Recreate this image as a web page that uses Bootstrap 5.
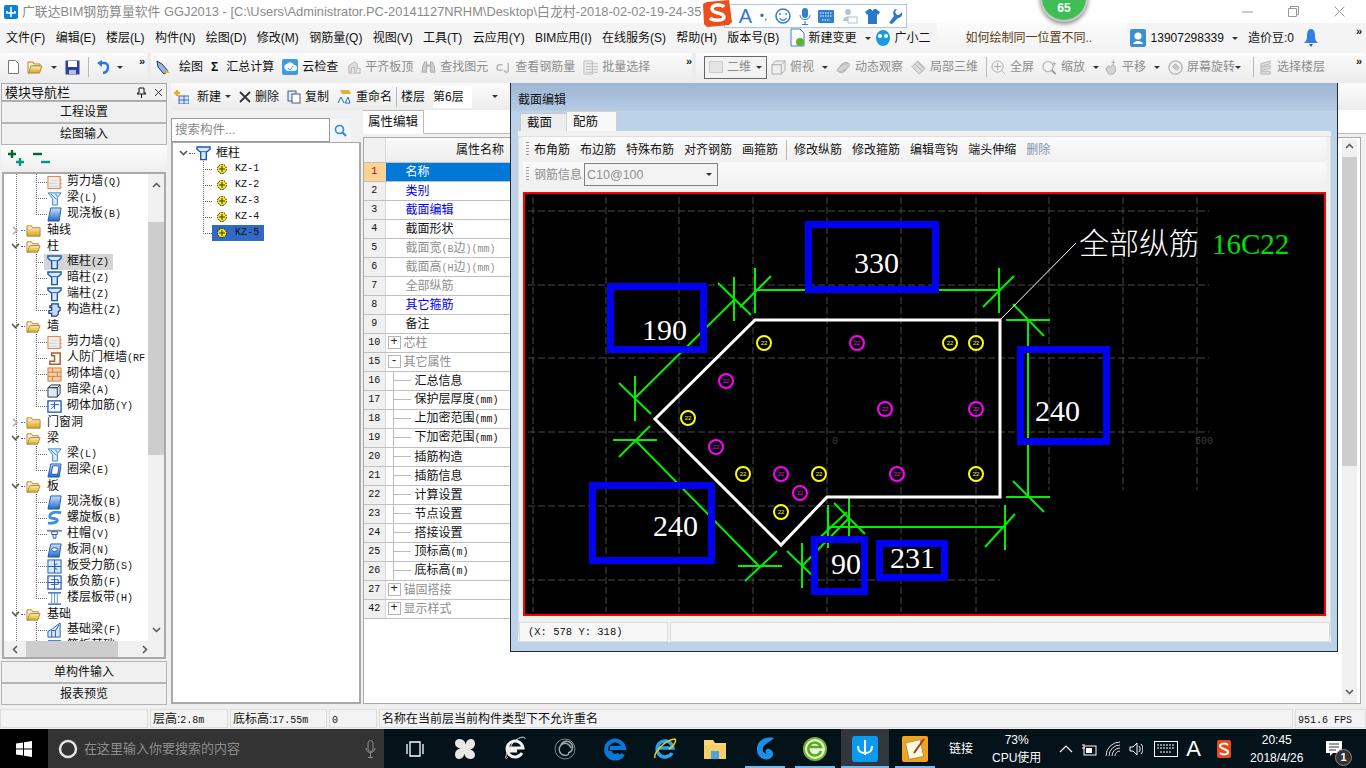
<!DOCTYPE html>
<html lang="zh-CN">
<head>
  <meta charset="UTF-8">
  <meta name="viewport" content="width=device-width, initial-scale=1.0">
  <title>广联达BIM钢筋算量软件 GGJ2013</title>
  <link href="https://cdn.jsdelivr.net/npm/bootstrap@5.3.0/dist/css/bootstrap.min.css" rel="stylesheet">
  <style>
    html, body { height: 768px; overflow: hidden; }
    body { font: 12px/16px "Liberation Sans", "Noto Sans CJK SC", sans-serif; color: #111; background: #f0f0f0; position: relative; }
    svg { display: block; flex: none; }

    /* title + menu */
    .win-title { height: 23px; background: #fff; color: #8a8a8a; font-size: 12.85px; padding-left: 4px; white-space: nowrap; overflow: hidden; }
    .win-title .ttl { margin-left: 4px; width: 690px; overflow: hidden; }
    .win-ctrl { width: 46px; height: 23px; color: #9a9a9a; }
    .win-menu { height: 30px; background: #f4f4f4; padding-left: 6px; font-size: 12px; white-space: nowrap; }
    .win-menu .mi { margin-right: 10.3px; }
    .qbox { width: 189px; height: 30px; margin-left: 6px; background: linear-gradient(#fbfbfb, #f2f2f2); color: #5a3a10; padding-left: 29px; line-height: 30px; }
    .ul-num { margin-left: 5px; }
    .ul-bean, .ul-bell { margin-left: 10px; }
    .win-tools { height: 30px; background: #ececec; white-space: nowrap; }
    .tool-sec { height: 28px; background: linear-gradient(#fbfbfb, #ececec); border-radius: 2px; }
    .off { color: #8c8c8c; }
    .caret-mini { width: 0; height: 0; border: 3px solid transparent; border-top: 3px solid #333; margin-top: 3px; flex: none; }
    .more { font: 700 11px/10px "Liberation Sans", sans-serif; color: #222; align-self: flex-start; margin-top: 3px; }
    .vsep { width: 1px; height: 20px; background: #b9b9b9; flex: none; }
    .twod { width: 63px; height: 23px; border: 1px solid #666; color: #8c8c8c; background: #f2f2f2; }
    .swatch { width: 14px; height: 12px; background: #e4e4e4; border: 1px solid #ccc; }
    .toolsec-a { width: 147px; }
    .toolsec-b { width: 541px; }

    /* workspace */
    .work { height: 625px; }
    .side { width: 166px; margin-left: 1px; flex: none; }
    .side-cap { height: 18px; border: 1px solid #a8a8a8; padding: 0 3px; font-size: 13px; line-height: 15px; background: #f0f0f0; }
    .side-btn.btn { display: block; width: 100%; height: 22px; padding: 0; border: 1px solid #b4b4b4; border-radius: 0; background: #f0f0f0; color: #111; font-size: 12px; line-height: 20px; }
    .side-tree { height: 487px; border: 2px solid #a9a9a9; margin: 0 1px 2px; background: #fff; }
    .tree-tools { height: 27px; background: linear-gradient(#fdfdfd, #eee); padding-left: 7px; }
    .tree-view { height: 467px; overflow: hidden; font-size: 12px; line-height: 16px; }
    .tree-body { height: 467px; overflow: hidden; background: #fff; }
    .sb-v { width: 16px; background: #f0f0f0; }
    .sb-h { height: 16px; background: #f0f0f0; }
    .sb-ar { color: #555; flex: none; }
    .thumb { background: #cdcdcd; }
    .thumb-nav { height: 233px; margin-top: 34px; }
    .scroll-long { height: 309px; }
    .tnode { height: 16px; white-space: nowrap; }
    .tnode.lv0 { background-image: linear-gradient(#777 50%, transparent 50%); background-size: 1px 2px; background-repeat: repeat-y; background-position: 12px 0; }
    .tnode.mid { background-image: linear-gradient(#777 50%, transparent 50%), linear-gradient(#777 50%, transparent 50%); background-size: 1px 2px, 1px 2px; background-repeat: repeat-y; background-position: 12px 0, 32px 0; }
    .elbow { width: 11px; height: 9px; margin-left: 32px; border-left: 1px dotted #666; border-bottom: 1px dotted #666; align-self: flex-start; flex: none; }
    .t-wrap { height: 16px; padding-right: 1px; }
    .t-wrap.on { background: #d4d4d4; margin-left: -3px; padding-left: 3px; padding-right: 4px; }
    .t-lab { margin-left: 5px; }
    .lat { font: 10px/16px "Liberation Mono", monospace; }
    .chev { width: 9px; margin-left: 7px; flex: none; }
    .dash { width: 4px; border-top: 1px dotted #666; flex: none; margin: 0 1px; }
    .f-lab { margin-left: 6px; }

    .comp { width: 190px; margin-left: 4px; flex: none; }
    .comp-top { position: relative; z-index: 1; height: 27px; background: linear-gradient(#fbfbfb, #ececec); white-space: nowrap; margin-right: -150px; padding-left: 3px; font-size: 12px; }
    .comp-top .floor-pick { width: 55px; background: #fff; line-height: 22px; }
    .comp-find { height: 24px; margin: 8px 0 0; width: 180px; }
    .comp-find .form-control { height: 24px; border-radius: 0; border: 1px solid #9a9a9a; padding: 0 3px; font-size: 12.5px; }
    .comp-find .form-control::placeholder { color: #888; }
    .find-btn { width: 22px; background: #f5f5f5; }
    .comp-tree { height: 562px; margin-top: 0; border: 2px solid #a9a9a9; border-top-width: 1px; background: #fff; padding-top: 2px; }
    .comp-root { padding-left: 6px; }
    .comp-root .chev { margin-left: 0; }
    .comp-root .dash { width: 6px; }
    .comp-root span { margin-left: 5px; }
    .kz { height: 16px; padding-left: 30px; background-image: linear-gradient(#777 50%, transparent 50%); background-size: 1px 2px; background-repeat: repeat-y; background-position: 30px 0; }
    .kz.last { background-image: none; }
    .kz .elbow { margin-left: 0; width: 9px; }
    .kz-sel { height: 16px; padding: 0 5px 0 4px; font: 10px/16px "Liberation Mono", monospace; letter-spacing: .1px; }
    .kz-sel span { margin-left: 7px; }
    .kz-sel.on { background: #316ac5; }

    .props { flex: 1; margin-left: 2px; min-width: 0; }
    .props-top { height: 27px; background: linear-gradient(#fbfbfb, #ececec); }
    .props-tabs { height: 24px; background: #fff; border-bottom: 1px solid #b9b9b9; }
    .props-tab { width: 61px; height: 24px; margin-bottom: -1px; background: #fff; border: 1px solid #b9b9b9; border-bottom-color: #fff; border-left: 0; text-align: center; line-height: 22px; font-size: 12.5px; }
    .props-frame { height: 567px; margin-top: 3px; margin-right: 5px; border: 1px solid #a9a9a9; background: #fff; }
    .prop-sb { width: 15px; margin: 1px 3px 0 auto; background: #f0f0f0; }
    .ptable { width: 147px; border-collapse: collapse; font-size: 12px; table-layout: fixed; margin: 0; align-self: flex-start; }
    .ptable th, .ptable td { height: 19px; padding: 0; border-bottom: 1px solid #c0c0c0; border-right: 1px solid #d8d8d8; white-space: nowrap; overflow: hidden; line-height: 18px; background: #fff; color: #111; }
    .ptable thead th { height: 24px; font-weight: 400; background: linear-gradient(#fafafa, #ececec); text-align: right; padding-right: 6px; font-size: 12px; }
    .ptable .rn { width: 21px; background: #f0f0f0; text-align: center; font: 10px/18px "Liberation Mono", monospace; }
    .ptable .cellbox { height: 18px; overflow: hidden; }
    .ptable .p0 { padding-left: 20px; }
    .ptable .on-rn { background: #ffd28f; color: #8a1010; }
    .ptable .on-td { background: #0078d7; color: #fff; }
    .ptable .lnk { color: #0000f0; }
    .ptable .dim { color: #8f8f8f; }
    .pm { width: 13px; height: 13px; margin: 0 3px 0 2px; border: 1px solid #b5b5b5; background: #fff; color: #222; font: 12px/10px "Liberation Mono", monospace; text-align: center; flex: none; }
    .branch { width: 22px; height: 18px; flex: none; margin-left: 7px; border-left: 1px solid #bbb; }
    .branch i { display: block; width: 17px; height: 9px; border-bottom: 1px solid #bbb; }

    /* status + task bar */
    .stat-row { height: 21px; background: #f0f0f0; padding-top: 1px; }
    .stat-cell { height: 19px; border: 1px solid #dcdcdc; padding-left: 2px; margin-right: 2px; line-height: 18px; white-space: nowrap; background: #f3f3f3; flex: none; overflow: hidden; }
    .w-cell-a { width: 148px; } .w-cell-b { width: 78px; } .w-cell-c { width: 97px; } .w-cell-d { width: 48px; } .w-cell-e { width: 914px; }
    .taskbar { height: 40px; background: #04121a; color: #fff; }
    .start { width: 48px; height: 40px; background: #000; }
    .search-bar { width: 336px; height: 40px; background: #333; color: #8d8d8d; padding: 0 8px 0 10px; font-size: 13px; }
    .search-bar span { margin-left: 2px; }
    .task-list { margin-left: 6px; }
    .task-ic { width: 50px; height: 40px; flex: none; }
    .task-ic.live { background: linear-gradient(#76b9ed, #76b9ed) center bottom / 40px 3px no-repeat; }
    .task-ic.cur { background: linear-gradient(#76b9ed, #76b9ed) center bottom / 48px 3px no-repeat, linear-gradient(#30383d, #30383d) center / 48px 40px no-repeat; }
    .tray-sm { line-height: 18px; text-align: center; font-size: 12px; }
    .tray-link { margin-left: 9px; }
    .tray-cpu { margin: 0 18px 0 19px; }
    .tray-kb { margin-left: 11px; }
    .tray-a { font-size: 22px; line-height: 24px; }
    .tray-clock { margin-left: 19px; }
    .note-badge { position: absolute; left: 9px; top: 8px; width: 17px; height: 17px; border-radius: 50%; background: #333; border: 1px solid #888; font-size: 11px; line-height: 15px; text-align: center; font-weight: 700; }

    /* overlays */
    .ime-bar { position: absolute; left: 724px; top: 4px; width: 183px; height: 24px; border: 1px solid #a9c8e5; background: #fff; padding-left: 10px; }
    .ime-a { font-size: 20px; color: #2a78c8; }
    .ime-a.dots { font-size: 12px; }
    .ime-s { position: absolute; left: 703px; top: 0; }
    .score { position: absolute; left: 1040px; top: -26px; width: 48px; height: 48px; border-radius: 50%; background: #3fbe55; border: 2px solid #c9c9c9; box-shadow: 0 2px 4px #888; color: #fff; font-weight: 700; font-size: 12px; text-align: center; padding-top: 24px; }
    .sec-win { position: absolute; z-index: 2; left: 510px; top: 83px; width: 828px; height: 569px; background: #bcd2e8; border: 1px solid #1e2b38; border-top: 0; font-size: 12px; }
    .sec-cap { height: 28px; padding: 9px 0 0 7px; background: linear-gradient(#9cb5d2, #b6cce5); line-height: 16px; }
    .sec-tabs { height: 20px; padding-left: 9px; }
    .sec-tab { border: 1px solid #c8c8c8; border-bottom: 0; background: #ededed; color: #111; font-size: 12.5px; padding-left: 6px; }
    .sec-tab.a { width: 47px; margin-top: 2px; line-height: 19px; }
    .sec-tab.b { width: 51px; margin-left: -1px; background: #f8f8f8; line-height: 20px; border-color: #d0d0d0; }
    .sec-body { width: 813px; height: 511px; margin-left: 7px; background: #f1f1f1; padding-top: 5px; }
    .sec-inner { border: 1px solid #dedede; border-bottom: 0; height: 500px; }
    .sec-bar { height: 25px; margin: 0 4px; background: linear-gradient(#fbfbfb, #f0f0f0); padding-left: 3px; white-space: nowrap; }
    .sec-bar span { margin-right: 10px; }
    .sec-bar .vsep { margin: 0 7px 0 -2px; }
    .text-del { color: #7d93ad; }
    .grip { width: 3px; height: 15px; margin-right: 5px; background-image: linear-gradient(#999 50%, transparent 50%); background-size: 2px 3px; flex: none; }
    .rebar-sel { width: 134px; height: 23px; margin-left: 2px; border: 1px solid #7f7f7f; color: #8f8f8f; background: #f3f3f3; padding: 0 5px 0 2px; font-size: 12.5px; }
    .cad { margin: 5px 0 0 4px; }
    .cad text { font-family: "Liberation Serif", "Noto Sans CJK SC", serif; fill: #fff; font-size: 30px; }
    .cad .note-cn { font-size: 30px; font-weight: 300; }
    .cad .note-gr { fill: #00e000; font-size: 29px; }
    .cad .bx { fill: none; stroke: #0000f5; stroke-width: 7; }
    .cad .grn { stroke: #00f000; stroke-width: 2; fill: none; }
    .cad .grd { stroke: #484848; stroke-dasharray: 7 3; fill: none; }
    .cad .ring-y { fill: none; stroke: #ffff00; stroke-width: 2; }
    .cad .ring-m { fill: none; stroke: #ff00ff; stroke-width: 2; }
    .cad .tiny-y, .cad .tiny-m { font: 6px "Liberation Sans", sans-serif; text-anchor: middle; }
    .cad .tiny-y { fill: #ffff00; }
    .cad .tiny-m { fill: #ff00ff; }
    .cad .lbl0 { font: 10px "Liberation Mono", monospace; fill: #3a3a3a; }
    .sec-foot { height: 21px; margin-top: 6px; }
    .sec-foot div { height: 20px; background: #f7f7f7; border: 1px solid #dedede; font: 10.5px/19px "Liberation Mono", monospace; padding-left: 8px; }
    .foot-a { width: 149px; margin-right: 2px; }
  </style>
</head>
<body>

  <svg width="0" height="0" class="position-absolute">
    <defs>
      <linearGradient id="gBlue" x1="0" y1="0" x2="0" y2="1"><stop offset="0" stop-color="#cfe2f8"/><stop offset="1" stop-color="#1f66c8"/></linearGradient>
      <linearGradient id="gFold" x1="0" y1="0" x2="0" y2="1"><stop offset="0" stop-color="#fff2c0"/><stop offset="1" stop-color="#d9a21c"/></linearGradient>
      <symbol id="i-col" viewBox="0 0 16 16"><path d="M1 1h14v2.500l-3 2.500h-1v8.500h-6V6H4L1 3.500z" fill="#dbe9fa" stroke="#1a58b8" stroke-width="1.500"/><path d="M6 6h4" stroke="#1a58b8"/></symbol>
      <symbol id="i-ccol" viewBox="0 0 16 16"><path d="M5 1h7v3l2 1v3l-2 1v3l-2 2H5V11H2V8h3V5H3V3h2z" fill="#c8dcf5" stroke="#1f3f88" stroke-width="1.300"/></symbol>
      <symbol id="i-wall" viewBox="0 0 16 16"><rect x="1" y="1.500" width="13" height="13" fill="#eee" stroke="#d87a3a"/><path d="M3 12h9M3 9h7M5 6h6" stroke="#b8b8b8" stroke-dasharray="1 1"/><path d="M15 4v2M15 8v2M15 12v2" stroke="#d87a3a"/></symbol>
      <symbol id="i-beam" viewBox="0 0 16 16"><path d="M1 2h14l-4 5v8H6V8z" fill="#dcecfb" stroke="#2a7fd8"/><path d="M4 3l6 6M9 3l2 3" stroke="#2a7fd8"/></symbol>
      <symbol id="i-slab" viewBox="0 0 16 16"><path d="M4 1h11l-2 14H1z" fill="url(#gBlue)" stroke="#1a58b8"/></symbol>
      <symbol id="i-door" viewBox="0 0 16 16"><path d="M5 2h9v12H3v-3h5V5H5z" fill="#fff" stroke="#b05a28" stroke-width="1.600"/></symbol>
      <symbol id="i-brick" viewBox="0 0 16 16"><rect x="1" y="1" width="14" height="14" fill="#f6cfa8" stroke="#d87a3a"/><path d="M1 5.500h14M1 10h14M6 1v4.500M11 5.500V10M6 10v5" stroke="#d87a3a"/></symbol>
      <symbol id="i-dbeam" viewBox="0 0 16 16"><path d="M1 5l4-3h9v9l-3 4H1z" fill="#dfe9f5" stroke="#234"/><path d="M5 5h6v10M1 5h10l3-3" fill="none" stroke="#234"/></symbol>
      <symbol id="i-rein" viewBox="0 0 16 16"><rect x="1" y="2" width="14" height="12" fill="#fff" stroke="#1a58b8" stroke-width="1.400"/><path d="M4 6h9M8 3v8M4 11l5-5" stroke="#1a58b8"/></symbol>
      <symbol id="i-ring" viewBox="0 0 16 16"><path d="M4 1h11l-2 14H1z" fill="url(#gBlue)" stroke="#1a58b8"/><path d="M6 3h7l-1.500 9H4.500z" fill="#fff" stroke="#1a58b8"/></symbol>
      <symbol id="i-spiral" viewBox="0 0 16 16"><path d="M15 2C8 0 3 2 3 6c0 3 8 1 8 4 0 2-5 3-10 3" fill="none" stroke="#3f8fe0" stroke-width="3"/></symbol>
      <symbol id="i-cap" viewBox="0 0 16 16"><path d="M0 3h16v2H0z" fill="#888"/><path d="M5 5h6v3H5zM6.500 8h3v4h-3z" fill="#fff" stroke="#1a58b8"/></symbol>
      <symbol id="i-hole" viewBox="0 0 16 16"><path d="M4 1h11l-2 14H1z" fill="url(#gBlue)" stroke="#1a58b8"/><ellipse cx="8" cy="7" rx="3" ry="2" fill="#fff" stroke="#1a58b8"/></symbol>
      <symbol id="i-sr" viewBox="0 0 16 16"><rect x="1" y="1" width="14" height="14" fill="#d8e8f8" stroke="#1a58b8"/><path d="M1 8h14M8 1v14" stroke="#1a58b8"/><path d="M11 5a3 3 0 1 0 0 6" fill="none" stroke="#1a58b8"/></symbol>
      <symbol id="i-sn" viewBox="0 0 16 16"><rect x="1" y="1" width="14" height="14" fill="#fff" stroke="#1a58b8" stroke-width="1.300"/><path d="M4 5h8v5H4M1 8h14M8 1v14" fill="none" stroke="#1a58b8"/></symbol>
      <symbol id="i-band" viewBox="0 0 16 16"><path d="M1 2h14M1 14h14" stroke="#1a58b8" stroke-width="1.500"/><path d="M5 2v12M11 2v12M8 2v12" stroke="#6a90c8"/></symbol>
      <symbol id="i-fnd" viewBox="0 0 16 16"><path d="M1 15V9l5-3 8-6v15z" fill="#dbe9fa" stroke="#1a58b8"/><path d="M5 15V8h4v7M9 8l4-6" fill="none" stroke="#1a58b8"/></symbol>
      <symbol id="i-fclose" viewBox="0 0 16 16"><path d="M1 3h5l1 2h8v9H1z" fill="url(#gFold)" stroke="#a98a3a"/></symbol>
      <symbol id="i-fopen" viewBox="0 0 16 16"><path d="M1 3h5l1 2h6v2H5l-2 7H1z" fill="#fff0c4" stroke="#a98a3a"/><path d="M4 7h11l-2.500 7H1.500z" fill="url(#gFold)" stroke="#a98a3a"/></symbol>
      <symbol id="i-kz" viewBox="0 0 12 12"><circle cx="6" cy="6" r="4.500" fill="#f4ea20" stroke="#111" stroke-dasharray="1.500 1"/><path d="M3 6h6M6 3v6" stroke="#333"/></symbol>
      <symbol id="g-level" viewBox="0 0 16 16"><path d="M3 14V6l6-4 3 2v10z" fill="#ddd" stroke="#b5b5b5"/><path d="M6 14V8h3v6M12 9h3v5h-3" fill="#eee" stroke="#b5b5b5"/></symbol>
      <symbol id="g-bino" viewBox="0 0 16 16"><path d="M2 6l2-4h2v11H1zM14 6l-2-4h-2v11h5z" fill="#ccc" stroke="#aaa"/><path d="M6 6h4" stroke="#aaa" stroke-width="2"/></symbol>
      <symbol id="g-rebar" viewBox="0 0 16 16"><path d="M7 5H4a3 3 0 0 0 0 6h3M9 11a2 2 0 0 0 4 0V3" fill="none" stroke="#b5b5b5" stroke-width="1.500"/></symbol>
      <symbol id="g-list" viewBox="0 0 16 16"><path d="M1 1h9v14H1z" fill="#eee" stroke="#bbb"/><path d="M3 4h14M3 7h14M3 10h14M3 13h14" stroke="#bbb"/></symbol>
      <symbol id="g-cube" viewBox="0 0 16 16"><path d="M1 5l4-4h10v10l-4 4H1z" fill="#eee" stroke="#aaa"/><path d="M1 5h10v10M11 5l4-4" fill="none" stroke="#aaa"/></symbol>
      <symbol id="g-orbit" viewBox="0 0 16 16"><ellipse cx="8" cy="8" rx="3.500" ry="6.500" transform="rotate(40 8 8)" fill="#d5d5d5" stroke="#aaa"/><ellipse cx="8" cy="8" rx="7.500" ry="2.500" transform="rotate(-30 8 8)" fill="none" stroke="#bbb"/></symbol>
      <symbol id="g-part" viewBox="0 0 16 16"><path d="M1 7l6-6 8 8-6 6z" fill="#ddd" stroke="#aaa"/><path d="M4 4l8 8M7 2l7 7" stroke="#aaa"/></symbol>
      <symbol id="g-full" viewBox="0 0 16 16"><circle cx="7" cy="7" r="6" fill="#f2f2f2" stroke="#aaa"/><path d="M7 3v8M3 7h8M11 11l4 4" stroke="#aaa"/></symbol>
      <symbol id="g-zoom" viewBox="0 0 16 16"><circle cx="6.500" cy="7" r="5.500" fill="#f4f4f4" stroke="#bbb" stroke-width="1.500"/><path d="M10.500 11l4 4" stroke="#999" stroke-width="2"/><path d="M13 2v4M11 4h4" stroke="#aaa"/></symbol>
      <symbol id="g-pan" viewBox="0 0 16 16"><path d="M3 9l3-3 2 1 3-2 2 2v5l-2 3H6z" fill="#d4d4d4" stroke="#aaa"/><path d="M11 0v5M9 2.500h4" stroke="#aaa"/></symbol>
      <symbol id="g-rot" viewBox="0 0 16 16"><circle cx="8" cy="8" r="7" fill="#f2f2f2" stroke="#bbb" stroke-width="1.500"/><path d="M8 4l4 4-3 3-4-4z" fill="#ccc" stroke="#aaa"/></symbol>
      <symbol id="g-floor" viewBox="0 0 16 16"><path d="M3 4l10-3v3L3 7zM3 8l10-2v3L3 11zM3 12h10v3H3z" fill="#ddd" stroke="#aaa" stroke-width=".8"/></symbol>
    </defs>
  </svg>

  <!-- title bar -->
  <div class="win-title d-flex align-items-center">
    <svg width="14" height="14" viewBox="0 0 14 14"><rect width="14" height="14" rx="2" fill="#0a7fdc"/><path d="M7 2v10M3 6v2h8V6" fill="none" stroke="#fff" stroke-width="1.600"/></svg>
    <div class="ttl">广联达BIM钢筋算量软件 GGJ2013 - [C:\Users\Administrator.PC-20141127NRHM\Desktop\白龙村-2018-02-02-19-24-35</div>
    <div class="ms-auto d-flex pe-1">
      <div class="win-ctrl d-flex align-items-center justify-content-center"><svg width="11" height="11" viewBox="0 0 11 11"><path d="M0 6h11" stroke="#999"/></svg></div>
      <div class="win-ctrl d-flex align-items-center justify-content-center"><svg width="11" height="11" viewBox="0 0 11 11"><path d="M2.500 2.500V.5h8v8h-2M.5 2.500h8v8h-8z" fill="none" stroke="#999"/></svg></div>
      <div class="win-ctrl d-flex align-items-center justify-content-center"><svg width="11" height="11" viewBox="0 0 11 11"><path d="M.5.500l10 10M10.500.500l-10 10" stroke="#999"/></svg></div>
    </div>
  </div>

  <!-- menu bar -->
  <div class="win-menu d-flex align-items-center">
    <span class="mi">文件(F)</span><span class="mi">编辑(E)</span><span class="mi">楼层(L)</span><span class="mi">构件(N)</span><span class="mi">绘图(D)</span><span class="mi">修改(M)</span><span class="mi">钢筋量(Q)</span><span class="mi">视图(V)</span><span class="mi">工具(T)</span><span class="mi">云应用(Y)</span><span class="mi">BIM应用(I)</span><span class="mi">在线服务(S)</span><span class="mi">帮助(H)</span><span class="mi">版本号(B)</span>
    <svg width="15" height="20" viewBox="0 0 15 20"><path d="M1 1h9l4 4v13H1z" fill="#fff" stroke="#3a7fd0"/><circle cx="10" cy="14" r="4" fill="#5fb030"/></svg>
    <span class="ms-1">新建变更</span><span class="caret-mini ms-2"></span>
    <svg class="ms-1" width="16" height="18" viewBox="0 0 16 18"><ellipse cx="8" cy="9" rx="7" ry="8" fill="#1a9be0"/><circle cx="5" cy="7" r="2" fill="#fff"/><circle cx="11" cy="7" r="2" fill="#fff"/></svg>
    <span class="ms-1">广小二</span>
    <div class="qbox">如何绘制同一位置不同..</div>
    <svg class="ms-1" width="16" height="20" viewBox="0 0 16 20"><rect y="1" width="16" height="18" rx="2" fill="#3d8fd1"/><circle cx="8" cy="8" r="3.500" fill="#fff"/><path d="M3 16c1-4 9-4 10 0z" fill="#fff"/></svg>
    <span class="ul-num">13907298339</span><span class="caret-mini ms-2"></span>
    <span class="ul-bean">造价豆:0</span>
    <svg class="ul-bell" width="14" height="20" viewBox="0 0 14 20"><path d="M7 1c3 0 4 3 4 7s1 5 3 7H0c2-2 3-3 3-7s1-7 4-7z" fill="#2f7fe6"/><path d="M5 16h4l-2 3z" fill="#1f5fb0"/></svg>
    <span class="more ms-auto me-1">»</span>
  </div>

  <!-- main tool bar -->
  <div class="win-tools d-flex" id="tools"></div>

  <div class="work d-flex">
    <!-- module navigator -->
    <div class="side">
      <div class="side-cap d-flex align-items-center">模块导航栏
        <svg class="ms-auto" width="9" height="11" viewBox="0 0 9 11"><path d="M2 1h5v5h2v1H0V6h2zM4.500 7v4" stroke="#111" fill="none"/></svg>
        <svg class="ms-2" width="9" height="9" viewBox="0 0 9 9"><path d="M1 1l7 7M8 1L1 8" stroke="#333"/></svg>
      </div>
      <button class="btn side-btn" type="button">工程设置</button>
      <button class="btn side-btn" type="button">绘图输入</button>
      <div class="tree-tools d-flex align-items-center gap-2">
        <svg width="17" height="17" viewBox="0 0 17 17"><path d="M4 0v8M0 4h8" stroke="#063" stroke-width="2.400"/><path d="M12 8v8M8 12h8" stroke="#097" stroke-width="2.400"/></svg>
        <svg width="17" height="17" viewBox="0 0 17 17"><path d="M0 4h9" stroke="#063" stroke-width="2.400"/><path d="M8 12h9" stroke="#097" stroke-width="2.400"/></svg>
      </div>
      <div class="side-tree">
        <div class="d-flex tree-view">
          <div class="tree-body flex-grow-1" id="navTree"></div>
          <div class="sb-v d-flex flex-column align-items-center">
            <svg class="sb-ar mt-2" width="9" height="6" viewBox="0 0 9 6"><path d="M1 5l3.500-3.500L8 5" fill="none" stroke="#555" stroke-width="1.500"/></svg>
            <div class="thumb thumb-nav w-100"></div>
            <svg class="sb-ar mt-auto mb-2" width="9" height="6" viewBox="0 0 9 6"><path d="M1 1l3.500 3.500L8 1" fill="none" stroke="#555" stroke-width="1.500"/></svg>
          </div>
        </div>
        <div class="sb-h d-flex align-items-center">
          <svg class="sb-ar ms-2" width="6" height="9" viewBox="0 0 6 9"><path d="M5 1L1.500 4.500 5 8" fill="none" stroke="#555" stroke-width="1.500"/></svg>
          <div class="thumb h-100 mx-2 flex-grow-1"></div>
          <svg class="sb-ar ms-3 me-3" width="6" height="9" viewBox="0 0 6 9"><path d="M1 1l3.500 3.500L1 8" fill="none" stroke="#555" stroke-width="1.500"/></svg>
        </div>
      </div>
      <button class="btn side-btn" type="button">单构件输入</button>
      <button class="btn side-btn" type="button">报表预览</button>
    </div>

    <!-- component tree -->
    <div class="comp">
      <div class="comp-top d-flex align-items-center gap-1" id="compTools"></div>
      <div class="comp-find input-group">
        <input class="form-control" placeholder="搜索构件...">
        <div class="find-btn d-flex align-items-center justify-content-center"><svg width="13" height="13" viewBox="0 0 13 13"><circle cx="5.500" cy="5.500" r="4" fill="none" stroke="#2c8be0" stroke-width="1.600"/><path d="M8.500 8.500l3.500 3.500" stroke="#2c8be0" stroke-width="2"/></svg></div>
      </div>
      <div class="comp-tree" id="compTree"></div>
    </div>

    <!-- properties -->
    <div class="props d-flex flex-column">
      <div class="props-top"></div>
      <div class="props-tabs d-flex"><div class="props-tab">属性编辑</div></div>
      <div class="props-frame d-flex">
        <table class="ptable" id="propTable"></table>
        <div class="prop-sb d-flex flex-column align-items-center">
          <svg class="sb-ar my-1" width="9" height="6" viewBox="0 0 9 6"><path d="M1 5l3.500-3.500L8 5" fill="none" stroke="#555" stroke-width="1.500"/></svg>
          <div class="thumb w-100 mt-1 scroll-long"></div>
          <svg class="sb-ar mt-auto mb-2" width="9" height="6" viewBox="0 0 9 6"><path d="M1 1l3.500 3.500L8 1" fill="none" stroke="#555" stroke-width="1.500"/></svg>
        </div>
      </div>
    </div>
  </div>

  <!-- status bar -->
  <div class="stat-row d-flex">
    <div class="stat-cell w-cell-a"></div>
    <div class="stat-cell w-cell-b">层高:<span class="lat">2.8m</span></div>
    <div class="stat-cell w-cell-c">底标高:<span class="lat">17.55m</span></div>
    <div class="stat-cell w-cell-d"><span class="lat">0</span></div>
    <div class="stat-cell w-cell-e">名称在当前层当前构件类型下不允许重名</div>
    <div class="stat-cell flex-grow-1 me-0"><span class="lat">951.6 FPS</span></div>
  </div>

  <!-- windows task bar -->
  <div class="taskbar d-flex align-items-center" id="taskbar"></div>

  <!-- section editor window -->
  <div class="sec-win">
    <div class="sec-cap">截面编辑</div>
    <div class="sec-tabs d-flex">
      <div class="sec-tab a">截面</div>
      <div class="sec-tab b">配筋</div>
    </div>
    <div class="sec-body">
      <div class="sec-inner">
        <div class="sec-bar d-flex align-items-center">
          <i class="grip"></i>
          <span>布角筋</span><span>布边筋</span><span>特殊布筋</span><span>对齐钢筋</span><span>画箍筋</span>
          <i class="vsep"></i>
          <span>修改纵筋</span><span>修改箍筋</span><span>编辑弯钩</span><span>端头伸缩</span><span class="text-del">删除</span>
        </div>
        <div class="sec-bar d-flex align-items-center">
          <i class="grip"></i>
          <span class="off me-0">钢筋信息</span>
          <div class="rebar-sel d-flex align-items-center justify-content-between">C10@100<i class="caret-mini"></i></div>
        </div>
        <svg class="cad" width="803" height="424" viewBox="523 192 803 424">
          <rect x="524" y="193" width="801" height="422" fill="#000" stroke="#f00" stroke-width="2"/>
          <path class="grd" d="M533 197V612M606 197V612M679 197V612M753 197V612M827 197V612M901 197V612M976 197V612M1049 197V490M1123 197V490M1197 197V490"/>
          <path class="grd" d="M528 211H1209M528 285H1209M528 358H1209M528 432H1209M528 506H1000M528 580H1000"/>
          <text class="lbl0" x="832" y="444">0</text>
          <text class="lbl0" x="1195" y="444">500</text>
          <!-- dimension lines -->
          <path class="grn" d="M755 290H1000M755 268V313M771 276L740 307M999 268V313M1014 276L983 307"/>
          <path class="grn" d="M734 300L635 398M734 277V321M718 283L751 315M635 376V421M619 383L651 414"/>
          <path class="grn" d="M635 440L759 566M613 440H657M619 457L650 426M738 566H782M745 581L777 551"/>
          <path class="grn" d="M802 566L849 518M802 543V588M787 551L818 581M849 496V536M834 503L865 534M828 505V548M813 544L847 512"/>
          <path class="grn" d="M828 527H1005M1005 505V550M985 547L1015 514"/>
          <path class="grn" d="M1028 320V497M1006 320H1050M1013 304L1044 336M1006 497H1050M1013 481L1044 512"/>
          <!-- section outline -->
          <path d="M755 320H1000V497H827L781 545L655 419Z" fill="none" stroke="#fff" stroke-width="3"/>
          <path d="M1000 320L1076 243" stroke="#fff"/>
          <g id="rebars"></g>
          <!-- dimension boxes -->
          <rect class="bx" x="610.500" y="286.500" width="93" height="63"/>
          <rect class="bx" x="808.500" y="224.500" width="127" height="65"/>
          <rect class="bx" x="592.500" y="485.500" width="119" height="75"/>
          <rect class="bx" x="814.500" y="539.500" width="50" height="52"/>
          <rect class="bx" x="879.500" y="543.500" width="65" height="34"/>
          <rect class="bx" x="1020.500" y="349.500" width="86" height="92"/>
          <text x="642" y="340">190</text>
          <text x="854" y="273">330</text>
          <text x="653" y="536">240</text>
          <text x="831" y="574">90</text>
          <text x="890" y="568">231</text>
          <text x="1035" y="421">240</text>
          <text class="note-cn" x="1079" y="254">全部纵筋</text>
          <text class="note-gr" x="1212" y="254">16C22</text>
        </svg>
        <div class="sec-foot d-flex">
          <div class="foot-a">(X: 578 Y: 318)</div>
          <div class="flex-grow-1"></div>
        </div>
      </div>
    </div>
  </div>

  <!-- overlays -->
  <div class="score">65</div>
  <div class="ime-bar d-flex align-items-center justify-content-around" id="imeBar"></div>
  <svg class="ime-s" width="29" height="27" viewBox="0 0 29 27"><path d="M4 2l22-2 3 22-3 3-22 2-3-3-1-20z" fill="#ee4d1c"/><path d="M21 7C19 4 9 4 9 9c0 5 12 3 12 8 0 4-11 4-14 1" fill="none" stroke="#fff" stroke-width="3.500"/></svg>

  <script>
    // navigator tree rows: [type, label, icon, last child?, selected?]
    const navRows = [
      ['c', '剪力墙(Q)', 'wall'], ['c', '梁(L)', 'beam'], ['c', '现浇板(B)', 'slab', 1],
      ['f', '轴线', 0], ['f', '柱', 1],
      ['c', '框柱(Z)', 'col', 0, 1], ['c', '暗柱(Z)', 'col'], ['c', '端柱(Z)', 'col'], ['c', '构造柱(Z)', 'ccol', 1],
      ['f', '墙', 1],
      ['c', '剪力墙(Q)', 'wall'], ['c', '人防门框墙(RF', 'door'], ['c', '砌体墙(Q)', 'brick'], ['c', '暗梁(A)', 'dbeam'], ['c', '砌体加筋(Y)', 'rein', 1],
      ['f', '门窗洞', 0], ['f', '梁', 1],
      ['c', '梁(L)', 'beam'], ['c', '圈梁(E)', 'ring', 1],
      ['f', '板', 1],
      ['c', '现浇板(B)', 'slab'], ['c', '螺旋板(B)', 'spiral'], ['c', '柱帽(V)', 'cap'], ['c', '板洞(N)', 'hole'], ['c', '板受力筋(S)', 'sr'], ['c', '板负筋(F)', 'sn'], ['c', '楼层板带(H)', 'band', 1],
      ['f', '基础', 1],
      ['c', '基础梁(F)', 'fnd'], ['c', '筏板基础(M)', 'band']
    ];
    const latin = s => s.replace(/[(A-Za-z0-9)]+/g, m => `<span class="lat">${m}</span>`);
    const chevOpen = '<svg class="chev" width="9" height="6" viewBox="0 0 9 6"><path d="M1 1l3.500 3.500L8 1" fill="none" stroke="#555" stroke-width="1.600"/></svg>';
    const chevShut = '<svg class="chev" width="9" height="9" viewBox="0 0 9 9"><path d="M2 1l4 3.500L2 8" fill="none" stroke="#aaa" stroke-width="1.600"/></svg>';
    document.getElementById('navTree').innerHTML = navRows.map(r => {
      if (r[0] === 'f') {
        return `<div class="tnode lv0 d-flex align-items-center">${r[2] ? chevOpen : chevShut}<i class="dash"></i><svg width="15" height="15"><use href="#i-${r[2] ? 'fopen' : 'fclose'}"/></svg><span class="f-lab">${r[1]}</span></div>`;
      }
      return `<div class="tnode ${r[3] ? 'lv0' : 'mid'} d-flex align-items-center"><i class="elbow"></i><span class="t-wrap d-flex align-items-center ${r[4] ? 'on' : ''}"><svg width="15" height="15"><use href="#i-${r[2]}"/></svg><span class="t-lab">${latin(r[1])}</span></span></div>`;
    }).join('');

    // component tree
    const kzRows = ['KZ-1', 'KZ-2', 'KZ-3', 'KZ-4', 'KZ-5'];
    document.getElementById('compTree').innerHTML =
      `<div class="tnode comp-root d-flex align-items-center">${chevOpen}<i class="dash"></i><svg width="15" height="15"><use href="#i-col"/></svg><span>框柱</span></div>` +
      kzRows.map((k, i) => `<div class="kz ${i === 4 ? 'last' : ''} d-flex align-items-center"><i class="elbow"></i><span class="kz-sel ${i === 4 ? 'on' : ''} d-flex align-items-center"><svg width="12" height="12"><use href="#i-kz"/></svg><span>${k}</span></span></div>`).join('');

    // property grid rows: [number, label, kind, tree marker]
    const propRows = [
      [1, '名称', 'on'], [2, '类别', 'lnk'], [3, '截面编辑', 'lnk'], [4, '截面形状', ''], [5, '截面宽(B边)(mm)', 'dim'], [6, '截面高(H边)(mm)', 'dim'],
      [7, '全部纵筋', 'dim'], [8, '其它箍筋', 'lnk'], [9, '备注', ''], [10, '芯柱', 'dim', '+'], [15, '其它属性', 'dim', '-'],
      [16, '汇总信息', 'b'], [17, '保护层厚度(mm)', 'b'], [18, '上加密范围(mm)', 'b'], [19, '下加密范围(mm)', 'b'], [20, '插筋构造', 'b'], [21, '插筋信息', 'b'],
      [22, '计算设置', 'b'], [23, '节点设置', 'b'], [24, '搭接设置', 'b'], [25, '顶标高(m)', 'b'], [26, '底标高(m)', 'b'], [27, '锚固搭接', 'dim', '+'], [42, '显示样式', 'dim', '+']
    ];
    document.getElementById('propTable').innerHTML =
      '<thead><tr><th class="rn"></th><th>属性名称</th></tr></thead><tbody>' +
      propRows.map(r => {
        let cell;
        if (r[3]) cell = `<div class="cellbox d-flex align-items-center"><span class="pm">${r[3]}</span><span class="dim">${r[1]}</span></div>`;
        else if (r[2] === 'b') cell = `<div class="cellbox d-flex align-items-center"><span class="branch"><i></i></span><span>${latin(r[1])}</span></div>`;
        else cell = `<div class="cellbox p0 ${r[2] === 'on' ? '' : r[2]}">${latin(r[1])}</div>`;
        return `<tr><td class="rn ${r[2] === 'on' ? 'on-rn' : ''}">${r[0]}</td><td class="${r[2] === 'on' ? 'on-td' : ''}">${cell}</td></tr>`;
      }).join('') + '</tbody>';

    // rebar points on the section
    const rebars = [
      [764, 343, 'y'], [950, 343, 'y'], [976, 343, 'y'], [688, 418, 'y'], [743, 474, 'y'], [819, 474, 'y'], [976, 474, 'y'], [781, 512, 'y'],
      [857, 343, 'm'], [726, 381, 'm'], [885, 409, 'm'], [976, 409, 'm'], [716, 447, 'm'], [781, 474, 'm'], [897, 474, 'm'], [800, 493, 'm']
    ];
    document.getElementById('rebars').innerHTML = rebars.map(([x, y, c]) =>
      `<circle class="ring-${c}" cx="${x}" cy="${y}" r="7"/><text class="tiny-${c}" x="${x}" y="${y + 2}">22</text>`
    ).join('');

    // tool bar definition
    const gi = (t, id) => `<span class="d-flex align-items-center gap-1 off"><svg width="15" height="15"><use href="#g-${id}"/></svg>${t}</span>`;
    const caret = '<i class="caret-mini ms-2"></i>';
    const pageIc = '<svg width="11" height="14" viewBox="0 0 11 14"><path d="M.5.500h7l3 3v10H.5z" fill="#fff" stroke="#778"/></svg>';
    const openIc = '<svg width="16" height="14" viewBox="0 0 16 14"><path d="M1 2h5l1 2h6v2H5l-2 7H1z" fill="#fff0c4" stroke="#a98a3a"/><path d="M4 6h11l-2.500 7H1.500z" fill="url(#gFold)" stroke="#a98a3a"/></svg>';
    const saveIc = '<svg width="15" height="15" viewBox="0 0 15 15"><rect x=".5" y=".5" width="14" height="14" fill="#2a3f9f"/><rect x="3" y="1" width="9" height="6" fill="#fff"/><rect x="4" y="10" width="7" height="4" fill="#b8c0e0"/></svg>';
    const undoIc = '<svg width="12" height="14" viewBox="0 0 12 14"><path d="M3 3h4c6 0 5 9-1 10" fill="none" stroke="#2a7ad8" stroke-width="2.500"/><path d="M0 3l5-3v7z" fill="#2a7ad8"/></svg>';
    const drawIc = '<svg width="16" height="16" viewBox="0 0 16 16"><path d="M2 2l5 3 6 7-4 3-6-7z" fill="#8fb8e8" stroke="#335"/><path d="M9 14l3-3 3 3z" fill="#e0b020"/></svg>';
    const cloudIc = '<svg width="16" height="16" viewBox="0 0 16 16"><rect width="16" height="16" rx="2" fill="#3a9be8"/><path d="M3 10a3 3 0 0 1 2-5 4 4 0 0 1 7 1 2.500 2.500 0 0 1 0 6H5" fill="#fff"/><path d="M6 9l2 2 3-4" stroke="#3a9be8" fill="none"/></svg>';
    document.getElementById('tools').innerHTML = `
      <div class="tool-sec d-flex align-items-center ps-2 toolsec-a">${pageIc}<span class="ms-2"></span>${openIc}${caret}<span class="ms-2"></span>${saveIc}<span class="ms-2"></span><i class="vsep"></i><span class="ms-2"></span>${undoIc}${caret}<span class="more ms-3">»</span></div>
      <div class="tool-sec d-flex align-items-center ps-1 ms-1 toolsec-b">
        ${drawIc}<span class="ms-2">绘图</span><b class="ms-2">Σ</b><span class="ms-2">汇总计算</span><span class="ms-2"></span>${cloudIc}<span class="ms-1">云检查</span>
        <span class="ms-2"></span>${gi('平齐板顶', 'level')}<span class="ms-2"></span>${gi('查找图元', 'bino')}<span class="ms-2"></span>${gi('查看钢筋量', 'rebar')}<span class="ms-2"></span>${gi('批量选择', 'list')}<span class="more ms-auto">»</span>
      </div>
      <div class="tool-sec d-flex align-items-center flex-grow-1 ms-1 ps-2">
        <div class="twod d-flex align-items-center ps-1 gap-1"><i class="swatch"></i>二维<i class="caret-mini ms-auto me-1"></i></div>
        <span class="ms-1"></span>${gi('俯视', 'cube')}${caret}<span class="ms-2"></span>${gi('动态观察', 'orbit')}<span class="ms-2"></span>${gi('局部三维', 'part')}<span class="ms-2"></span><i class="vsep"></i><span class="ms-1"></span>
        ${gi('全屏', 'full')}<span class="ms-2"></span>${gi('缩放', 'zoom')}${caret}<span class="ms-1"></span>${gi('平移', 'pan')}${caret}<span class="ms-2"></span>${gi('屏幕旋转', 'rot')}<i class="caret-mini"></i><span class="ms-2 ps-1"></span><i class="vsep"></i><span class="ms-1"></span>${gi('选择楼层', 'floor')}<span class="more ms-auto me-1">»</span>
      </div>`;

    document.getElementById('compTools').innerHTML = `
      <svg width="15" height="15" viewBox="0 0 15 15"><path d="M3 1v6M0 4h6" stroke="#e0b020" stroke-width="2.500"/><rect x="5" y="7" width="10" height="8" fill="#dbe9fa" stroke="#3a6ab0"/><path d="M5 11h10M10 7v8" stroke="#3a6ab0"/></svg><span class="ps-1">新建</span><i class="caret-mini"></i>
      <svg class="ms-1" width="12" height="12" viewBox="0 0 12 12"><path d="M1 1l10 10M11 1L1 11" stroke="#333" stroke-width="1.800"/></svg><span>删除</span>
      <svg class="ms-1" width="14" height="14" viewBox="0 0 14 14"><rect x="1" y="1" width="8" height="10" fill="#dbe9fa" stroke="#557"/><rect x="5" y="4" width="8" height="9" fill="#fff" stroke="#557"/></svg><span>复制</span>
      <svg class="ms-1" width="15" height="15" viewBox="0 0 15 15"><path d="M3 1h9l2 4H5z" fill="#d9b23a"/><path d="M1 14l3-6 3 6M8 14h5l-2-6z" fill="none" stroke="#2a6ab8"/></svg><span>重命名</span>
      <i class="vsep"></i><span>楼层</span><span class="ms-1 floor-pick">第6层</span><i class="caret-mini ms-3"></i><i class="vsep ms-2"></i>`;

    // task bar
    const tIc = (inner, cls = '') => `<div class="task-ic d-flex align-items-center justify-content-center ${cls}"><svg width="26" height="26" viewBox="0 0 26 26">${inner}</svg></div>`;
    document.getElementById('taskbar').innerHTML = `
      <div class="start d-flex align-items-center justify-content-center"><svg width="16" height="16" viewBox="0 0 16 16"><path d="M0 2.500l7-1V7.500H0zM8 1.300l8-1.300V7.500H8zM0 8.500h7v6l-7-1zM8 8.500h8V16l-8-1.300z" fill="#fff"/></svg></div>
      <div class="search-bar d-flex align-items-center">
        <svg class="me-1" width="20" height="20" viewBox="0 0 20 20"><circle cx="10" cy="10" r="8" fill="none" stroke="#e4e4e4" stroke-width="2.500"/></svg>
        <span>在这里输入你要搜索的内容</span>
        <svg class="ms-auto" width="11" height="18" viewBox="0 0 11 18"><rect x="3" y="0.500" width="5" height="11" rx="2.500" fill="none" stroke="#8d8d8d"/><path d="M1 8c0 6 9 6 9 0M5.500 13v4M3 17.500h5" fill="none" stroke="#8d8d8d"/></svg>
      </div>
      <div class="task-list d-flex">
        ${tIc('<path d="M8 6h10v14H8zM5 8v10M21 8v10" fill="none" stroke="#fff" stroke-width="1.300"/>')}
        ${tIc('<path d="M13 13C7 13 3 11 3 7s5-5 8-3 3 6 2 9zM13 13c0-6 2-10 6-10s5 5 3 8-6 3-9 2zM13 13c6 0 10 2 10 6s-5 5-8 3-3-6-2-9zM13 13c0 6-2 10-6 10s-5-5-3-8 6-3 9-2z" fill="#e8e8e8"/>')}
        ${tIc('<path d="M20 17a8 8 0 1 1 1-5H6M6 15h9" fill="none" stroke="#f1f1f1" stroke-width="3"/><path d="M6 21C2 25 3 20 10 8c6-8 14-8 13-5" fill="none" stroke="#ddd"/>')}
        ${tIc('<path d="M19 12a6 6 0 1 0-2 6M9 9a6 6 0 1 1 7 8" fill="none" stroke="#9aa" stroke-width="1.500"/><circle cx="13" cy="13" r="10" fill="none" stroke="#888"/>')}
        ${tIc('<path d="M21 18a9 9 0 1 1 1-6H8M8 15a5 5 0 0 0 9 3" fill="none" stroke="#0a78d7" stroke-width="4"/>')}
        ${tIc('<path d="M20 17a8 8 0 1 1 1-5H7" fill="none" stroke="#27a4ee" stroke-width="3.500"/><path d="M3 22C1 18 12 4 23 3c2 2-2 8-6 10" fill="none" stroke="#f2c811" stroke-width="1.500"/>')}
        ${tIc('<path d="M2 4h9l2 3h11v16H2z" fill="#ffd76e"/><rect x="2" y="9" width="22" height="14" fill="#f5cf6a"/><rect x="9" y="15" width="8" height="8" fill="#4aa5d8"/>')}
        ${tIc('<path d="M22 2C11 0 4 6 5 15c1 8 11 11 15 6 3-4-1-9-5-8-2 1-2 4 0 5-3 0-5-3-4-6 1-4 7-6 11-10z" fill="#1c8fe8"/>', 'live')}
        ${tIc('<circle cx="13" cy="13" r="11" fill="#e9f5d6" stroke="#6cb930" stroke-width="2"/><path d="M19 15a6.500 6.500 0 1 1 0-4H8" fill="none" stroke="#5aa820" stroke-width="2.500"/>', 'live')}
        ${tIc('<rect width="26" height="26" rx="3" fill="#0a9bf0"/><path d="M13 4v15M6 10c0 6 3 7 7 7s7-1 7-7" fill="none" stroke="#fff" stroke-width="2"/>', 'cur')}
        ${tIc('<rect width="26" height="26" rx="2" fill="#f2a31c"/><rect x="5" y="5" width="15" height="17" transform="rotate(-12 13 13)" fill="#fff6dc" stroke="#996"/><path d="M22 3L12 17" stroke="#b5301a" stroke-width="2"/>', 'live')}
      </div>
      <div class="tray-link">链接</div>
      <div class="tray-sm tray-cpu">73%<br>CPU使用</div>
      <svg width="14" height="8" viewBox="0 0 14 8"><path d="M1 7l6-6 6 6" fill="none" stroke="#fff" stroke-width="1.200"/></svg>
      <svg class="ms-2" width="16" height="14" viewBox="0 0 16 14"><path d="M1 3h3M1 6h3" stroke="#fff"/><rect x="3" y="4" width="12" height="9" fill="none" stroke="#fff"/><rect x="5" y="6" width="6" height="5" fill="#fff"/></svg>
      <svg class="ms-2" width="16" height="16" viewBox="0 0 16 16"><path d="M1 15a14 14 0 0 1 14-14M4 15A11 11 0 0 1 15 4M7 15a8 8 0 0 1 8-8M10 15a5 5 0 0 1 5-5" fill="none" stroke="#ddd"/></svg>
      <svg class="ms-2" width="14" height="14" viewBox="0 0 14 14"><path d="M1 5h3l4-4v12L4 9H1zM10 4c1.500 2 1.500 4 0 6M12 2c2.500 3 2.500 7 0 10" fill="none" stroke="#fff"/></svg>
      <svg class="tray-kb" width="24" height="16" viewBox="0 0 24 16"><rect x=".5" y=".5" width="23" height="15" fill="none" stroke="#fff"/><path d="M3 4h18M3 7h18M6 11h12" stroke="#fff" stroke-dasharray="2 1"/></svg>
      <span class="ms-2 tray-a">A</span>
      <svg class="ms-3" width="14" height="18" viewBox="0 0 14 18"><rect width="14" height="18" rx="2" fill="#e84a1c"/><path d="M11 5C9 3 3 3 3 6c0 3 8 3 8 6s-6 3-8 1" fill="none" stroke="#fff" stroke-width="2"/></svg>
      <div class="tray-sm tray-clock">20:45<br>2018/4/26</div>
      <div class="ms-auto me-4 d-flex position-relative">
        <svg width="16" height="16" viewBox="0 0 16 16"><path d="M0 0h16v12H7l-3 3v-3H0z" fill="#fff"/><path d="M3 3h10M3 6h10M3 9h7" stroke="#333"/></svg>
        <span class="note-badge">1</span>
      </div>`;

    // input method bar
    document.getElementById('imeBar').innerHTML = `
      <span class="ime-a">A</span><span class="ime-a dots">•,</span>
      <svg width="16" height="16" viewBox="0 0 16 16"><circle cx="8" cy="8" r="7" fill="none" stroke="#2f7fd0" stroke-width="1.500"/><path d="M5 5v2M11 5v2M4.500 10c2 3 5 3 7 0" fill="none" stroke="#2f7fd0" stroke-width="1.300"/></svg>
      <svg width="12" height="17" viewBox="0 0 12 17"><rect x="3" y="0" width="6" height="10" rx="3" fill="#2f7fd0"/><path d="M1 7c0 6 10 6 10 0M6 13v3M3 16.500h6" fill="none" stroke="#2f7fd0"/></svg>
      <svg width="16" height="13" viewBox="0 0 16 13"><rect width="16" height="13" rx="1" fill="#2f7fd0"/><path d="M2 3h12M2 6h12M4 10h8" stroke="#fff" stroke-dasharray="1.500 1"/></svg>
      <svg width="16" height="16" viewBox="0 0 16 16"><circle cx="6" cy="4" r="3" fill="#b5c2cf"/><path d="M1 13c0-6 9-6 9 0z" fill="#b5c2cf"/><rect x="6" y="9" width="9" height="6" fill="#fff" stroke="#b5c2cf"/></svg>
      <svg width="15" height="15" viewBox="0 0 15 15"><path d="M4 0h2l1.500 2L9 0h2l4 3-2 3-1-1v10H3V5L2 6 0 3z" fill="#2a78c8"/></svg>
      <svg width="14" height="15" viewBox="0 0 14 15"><path d="M9 0l-2 3 2 3 2 0 3-3c1 3-1 6-4 6L4 15 1 14 6 7C4 3 6 0 9 0z" fill="#2a78c8"/></svg>`;
  </script>
</body>
</html>
